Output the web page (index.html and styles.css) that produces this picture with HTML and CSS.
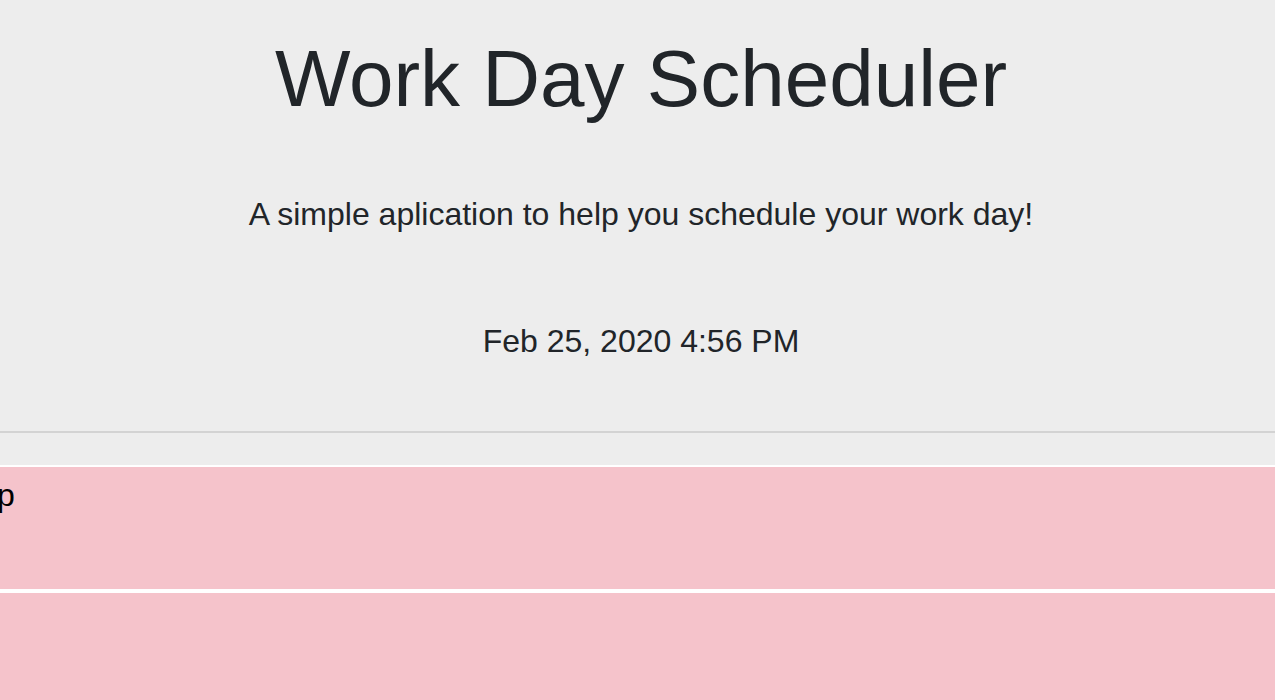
FILE: index.html
```
<!DOCTYPE html>
<html lang="en">
<head>
<meta charset="utf-8">
<title>Work Day Scheduler</title>
<link rel="stylesheet" href="styles.css">
</head>
<body>
<header class="jumbotron">
  <h1 class="title">Work Day Scheduler</h1>
  <p class="lead">A simple aplication to help you schedule your work day!</p>
  <p class="current-day">Feb 25, 2020 4:56 PM</p>
</header>
<main class="schedule">
  <div class="time-block past"><span class="hour">p</span></div>
  <div class="time-block past"></div>
  <div class="time-block past"></div>
</main>
</body>
</html>
```
FILE: styles.css
```
html, body {
  margin: 0;
  padding: 0;
}
body {
  background: #ededed;
  font-family: "Liberation Sans", Arial, sans-serif;
  color: #212529;
  overflow: hidden;
}
.jumbotron {
  text-align: center;
  padding: 31px 0 70px 7px;
  border-bottom: 2px solid #d3d3d3;
}
.title {
  margin: 0;
  font-size: 80px;
  font-weight: 400;
  line-height: 1.2;
}
.lead {
  margin: 68px 0 0;
  font-size: 32px;
  line-height: 1.2;
}
.current-day {
  margin: 89px 0 0;
  font-size: 32px;
  line-height: 1.2;
}
.schedule {
  margin-top: 32px;
  display: flex;
  flex-direction: column;
}
.time-block {
  height: 122px;
  background: #f5c3cb;
  border-top: 2px solid #ffffff;
  border-bottom: 2px solid #ffffff;
  box-sizing: content-box;
}
.hour {
  display: block;
  margin: 9px 0 0 -3px;
  font-size: 32px;
  line-height: 1.2;
  color: #000;
}
```
